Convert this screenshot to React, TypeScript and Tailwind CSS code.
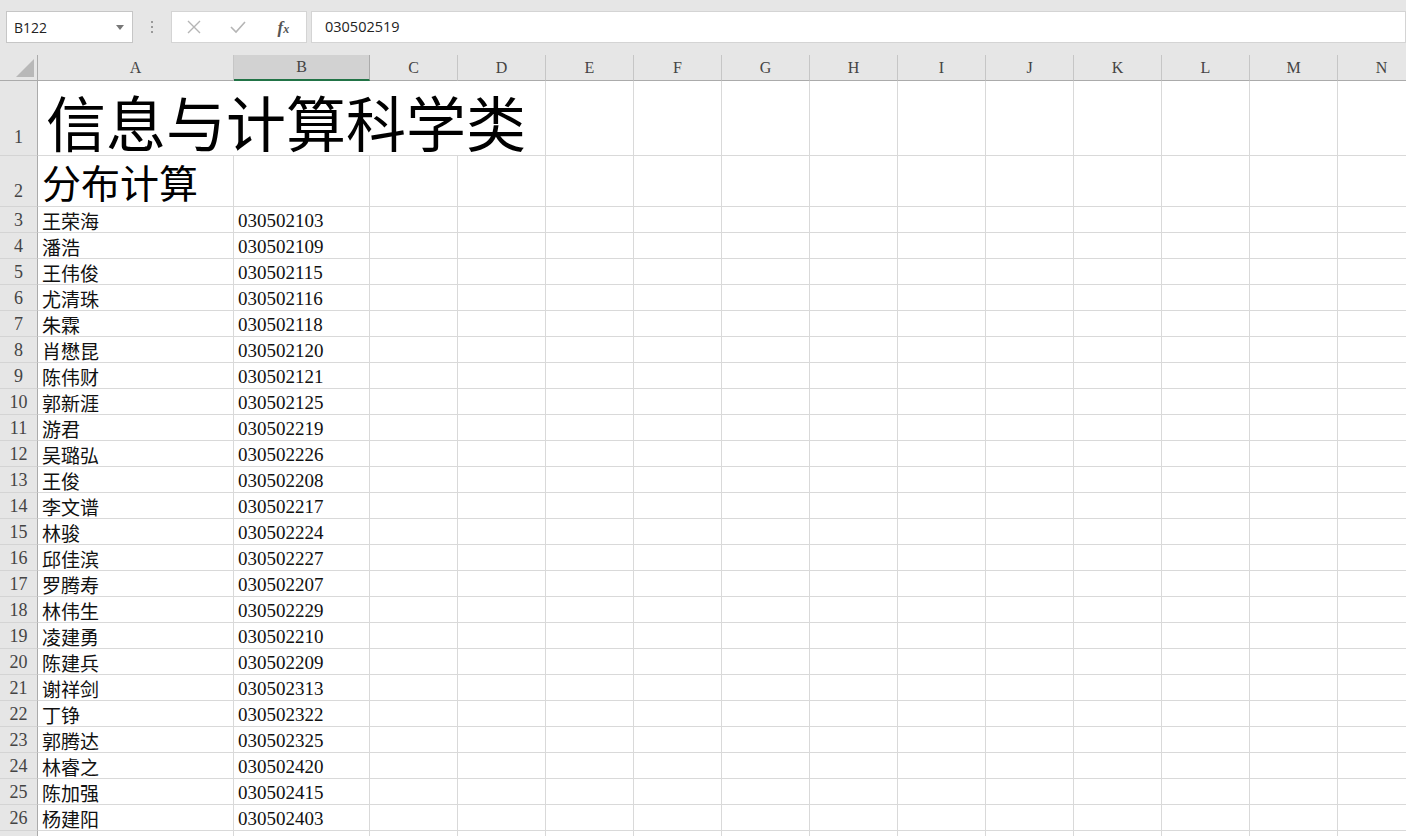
import React from 'react';

const cols = ['A', 'B', 'C', 'D', 'E', 'F', 'G', 'H', 'I', 'J', 'K', 'L', 'M', 'N'];
const widths = [196, 136, 88, 88, 88, 88, 88, 88, 88, 88, 88, 88, 88, 88];

const data: [string, string][] = [
  ['王荣海', '030502103'],
  ['潘浩', '030502109'],
  ['王伟俊', '030502115'],
  ['尤清珠', '030502116'],
  ['朱霖', '030502118'],
  ['肖懋昆', '030502120'],
  ['陈伟财', '030502121'],
  ['郭新涯', '030502125'],
  ['游君', '030502219'],
  ['吴璐弘', '030502226'],
  ['王俊', '030502208'],
  ['李文谱', '030502217'],
  ['林骏', '030502224'],
  ['邱佳滨', '030502227'],
  ['罗腾寿', '030502207'],
  ['林伟生', '030502229'],
  ['凌建勇', '030502210'],
  ['陈建兵', '030502209'],
  ['谢祥剑', '030502313'],
  ['丁铮', '030502322'],
  ['郭腾达', '030502325'],
  ['林睿之', '030502420'],
  ['陈加强', '030502415'],
  ['杨建阳', '030502403'],
];

const serif = { fontFamily: '"Liberation Serif", "Noto Sans CJK SC", serif' };

function RowHead({ n, h, pb = 2 }: { n: string; h: number; pb?: number }) {
  return (
    <div
      className="w-[38px] shrink-0 bg-[#e6e6e6] border-r border-r-[#ababab] border-b border-b-[#d4d4d4] flex items-end justify-center text-[18px] leading-none text-[#444]"
      style={{ height: h, paddingBottom: pb }}
    >
      {n}
    </div>
  );
}

function Cell({ w, children, className = '' }: { w: number; children?: React.ReactNode; className?: string }) {
  return (
    <div
      className={`shrink-0 border-r border-b border-[#d9d9d9] flex items-end pl-[4px] overflow-visible whitespace-nowrap ${className}`}
      style={{ width: w }}
    >
      {children}
    </div>
  );
}

export default function App() {
  return (
    <div className="w-[1406px] h-[836px] overflow-hidden bg-white" style={serif}>
      {/* formula bar */}
      <div className="h-[55px] bg-[#e6e6e6] flex items-start pt-[11px] pl-[6px]" style={{ fontFamily: '"Open Sans", "Liberation Sans", sans-serif' }}>
        <div className="w-[127px] h-[32px] bg-white border border-[#c6c6c6] flex items-center justify-between pl-[7px] pr-[8px] text-[14px] text-[#222]">
          <span>B122</span>
          <svg width="8" height="5" viewBox="0 0 8 5"><path d="M0 0h8L4 5z" fill="#777" /></svg>
        </div>
        <div className="w-[38px] h-[32px] flex flex-col items-center justify-center gap-[3px]">
          <span className="w-[2px] h-[2px] bg-[#999]" />
          <span className="w-[2px] h-[2px] bg-[#999]" />
          <span className="w-[2px] h-[2px] bg-[#999]" />
        </div>
        <div className="w-[136px] h-[32px] bg-white border border-[#d4d4d4] flex items-center">
          <div className="w-[44px] flex justify-center">
            <svg width="16" height="16" viewBox="0 0 16 16"><path d="M2 2l12 12M14 2L2 14" stroke="#b5b5b5" strokeWidth="1.4" /></svg>
          </div>
          <div className="w-[46px] flex justify-center">
            <svg width="18" height="16" viewBox="0 0 18 16"><path d="M2 8l5 5L16 3" stroke="#b5b5b5" strokeWidth="1.6" fill="none" /></svg>
          </div>
          <div className="w-[46px] flex justify-center items-baseline italic font-bold text-[17px] leading-none text-[#555]" style={{ fontFamily: '"Liberation Serif", serif' }}>
            <span>f</span><span className="text-[12px]">x</span>
          </div>
        </div>
        <div className="ml-[4px] flex-1 h-[32px] bg-white border border-[#d4d4d4] flex items-center pl-[13px] text-[14.5px] text-[#222]">
          030502519
        </div>
      </div>

      {/* column headers */}
      <div className="flex h-[26px]">
        <div className="w-[38px] shrink-0 bg-[#e6e6e6] border-r border-r-[#ababab] border-b border-b-[#ababab] relative">
          <svg className="absolute right-[3px] bottom-[3px]" width="18" height="18" viewBox="0 0 18 18"><path d="M18 0V18H0z" fill="#b8b8b8" /></svg>
        </div>
        {cols.map((c, i) => (
          <div
            key={c}
            className={`shrink-0 flex items-center justify-center text-[16px] text-[#444] ${
              c === 'B'
                ? 'bg-[#d2d2d2] border-b-2 border-b-[#217346] border-r border-r-[#ababab]'
                : 'bg-[#e6e6e6] border-b border-b-[#ababab] border-r border-r-[#c6c6c6]'
            }`}
            style={{ width: widths[i] }}
          >
            {c}
          </div>
        ))}
      </div>

      {/* row 1 */}
      <div className="flex h-[75px]">
        <RowHead n="1" h={75} pb={9} />
        <div className="shrink-0 border-r border-b border-[#d9d9d9] flex items-end pl-[8px] text-[60px] leading-none text-black" style={{ width: 196 + 136 + 88 + 88, paddingBottom: 0 }}>
          <span className="relative top-[2px]">信息与计算科学类</span>
        </div>
        {widths.slice(4).map((w, i) => (
          <Cell key={i} w={w} />
        ))}
      </div>

      {/* row 2 */}
      <div className="flex h-[51px]">
        <RowHead n="2" h={51} pb={6} />
        <Cell w={196} className="text-[39px] leading-none text-black pb-[2px]">分布计算</Cell>
        {widths.slice(1).map((w, i) => (
          <Cell key={i} w={w} />
        ))}
      </div>

      {/* data rows */}
      {data.map(([name, id], r) => (
        <div key={r} className="flex h-[26px]">
          <RowHead n={String(r + 3)} h={26} pb={3} />
          <Cell w={196} className="text-[19px] leading-none text-[#111] pb-0">{name}</Cell>
          <Cell w={136} className="text-[19px] leading-none text-[#111] pb-[2px]">{id}</Cell>
          {widths.slice(2).map((w, i) => (
            <Cell key={i} w={w} />
          ))}
        </div>
      ))}
      <div className="flex h-[26px]">
        <RowHead n="" h={26} />
        {widths.map((w, i) => (
          <Cell key={i} w={w} />
        ))}
      </div>
    </div>
  );
}
